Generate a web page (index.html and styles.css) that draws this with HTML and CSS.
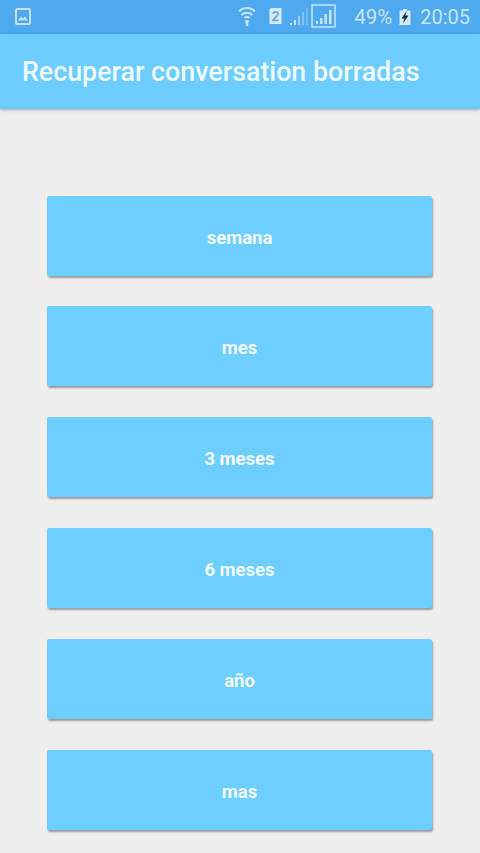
FILE: index.html
```html
<!DOCTYPE html>
<html lang="es">
<head>
<meta charset="utf-8">
<title>Recuperar conversation borradas</title>
<link rel="stylesheet" href="styles.css">
</head>
<body>
<div class="screen">
  <header class="status">
    <svg class="ic-photo" width="16" height="17" viewBox="0 0 16 17"><rect x="1" y="1" width="14" height="15" rx="1" fill="none" stroke="#c4e2f9" stroke-width="2"/><path d="M3 12.500l3-4 2 2 2-2 3 4z" fill="#c4e2f9"/></svg>
    <div class="status-right">
      <svg class="ic-wifi" width="18" height="22" viewBox="0 0 18 22"><g fill="none" stroke="#c8e4fa" stroke-width="2"><path d="M1 6.500a11 11 0 0 1 16 0"/><path d="M3.500 10a8 8 0 0 1 11 0"/><path d="M6.500 13a3.500 3.500 0 0 1 5 0"/></g><path d="M7 15h4l-1 6H8z" fill="#c8e4fa"/></svg>
      <svg class="ic-sim" width="13" height="18" viewBox="0 0 13 18"><path d="M.5 2.500 2 1h10.500v16H.5z" fill="#d6ebfb"/><path d="M4 6.800C4.500 4 9 4.200 9 7c0 2-3.500 3.400-5 6.400h5.500" fill="none" stroke="#6fa9d8" stroke-width="1.800"/></svg>
      <svg class="ic-signal-a" width="18" height="22" viewBox="0 0 18 22"><g fill="#c8e4fa"><rect x="0" y="18" width="2" height="2"/><rect x="4" y="15" width="2" height="5"/><rect x="8" y="11" width="2" height="9" opacity=".7"/><rect x="12" y="7" width="2" height="13" opacity=".45"/><rect x="16" y="3" width="2" height="17" opacity=".3"/></g></svg>
      <svg class="ic-signal-b" width="25" height="24" viewBox="0 0 25 24"><rect x="1" y="1" width="23" height="22" fill="none" stroke="#c8e4fa" stroke-width="1.500"/><g fill="#c8e4fa"><rect x="5" y="17" width="2" height="3"/><rect x="9" y="14" width="2.500" height="6"/><rect x="13.500" y="10" width="2.500" height="10"/><rect x="18" y="6" width="2.500" height="14"/></g></svg>
      <span class="pct">49%</span>
      <svg class="ic-batt" width="12" height="16" viewBox="0 0 12 16"><path d="M4 0h4v1.500h3.500V16H.5V1.500H4z" fill="#d6ebfb"/><path d="M7.500 2 2.500 9.500h2.800L4 14.500l5.500-8H6.500z" fill="#17324a"/></svg>
      <span class="clock">20:05</span>
    </div>
  </header>
  <div class="appbar"><h1 class="title">Recuperar conversation borradas</h1></div>
  <main class="list">
    <button class="btn">semana</button>
    <button class="btn">mes</button>
    <button class="btn">3 meses</button>
    <button class="btn">6 meses</button>
    <button class="btn">año</button>
    <button class="btn">mas</button>
  </main>
</div>
</body>
</html>
```

FILE: styles.css
```css
html, body {
  margin: 0;
  padding: 0;
  background: #eeeeee;
}
.screen {
  width: 480px;
  height: 853px;
  overflow: hidden;
  display: flex;
  flex-direction: column;
  font-family: Roboto, "Liberation Sans", sans-serif;
  background: #eeeeee;
}
.status {
  height: 34px;
  flex: none;
  background: #4fa9ee;
  display: flex;
  align-items: center;
  justify-content: space-between;
  padding: 0 10px 0 15px;
}
.ic-photo { margin-bottom: 2px; }
.status-right {
  display: flex;
  align-items: center;
  color: #c8e4fa;
}
.ic-wifi { margin-right: 13px; margin-bottom: 2px; }
.ic-sim { margin-right: 8px; margin-bottom: 3px; }
.ic-signal-a { margin-right: 3px; margin-bottom: 2px; }
.ic-signal-b { margin-bottom: 3px; margin-right: 18px; }
.pct {
  font-size: 20.500px;
  margin-right: 7px;
}
.ic-batt { margin-right: 9px; }
.clock {
  font-size: 20px;
}
.appbar {
  height: 75px;
  flex: none;
  background: #6ccdfe;
  box-shadow: 0 1px 3px rgba(0, 0, 0, .3);
  display: flex;
  align-items: center;
  padding-left: 22px;
  position: relative;
}
.title {
  margin: 1px 0 0;
  font-size: 26.800px;
  font-weight: 500;
  color: #eefaff;
  white-space: nowrap;
}
.list {
  display: flex;
  flex-direction: column;
  gap: 30.800px;
  padding: 86.600px 48px 0 47px;
}
.btn {
  height: 80px;
  flex: none;
  border: 0;
  border-radius: 2px;
  background: #6ecffe;
  color: #f2fbff;
  font-family: inherit;
  font-size: 18.500px;
  font-weight: 700;
  box-shadow: 1px 2px 2px rgba(0, 0, 0, .35);
  padding: 4px 0 0;
}
```
